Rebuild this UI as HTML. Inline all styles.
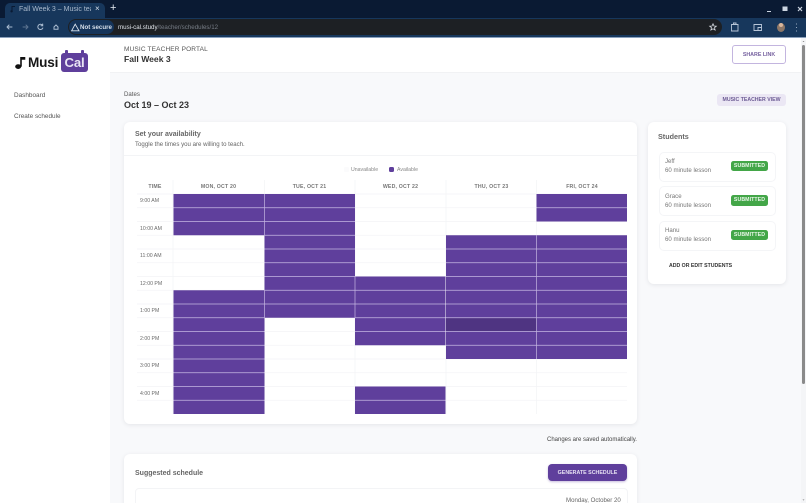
<!DOCTYPE html>
<html>
<head>
<meta charset="utf-8">
<style>
html,body{margin:0;padding:0;width:806px;height:503px;overflow:hidden;background:#f8f9fb;font-family:"Liberation Sans",sans-serif;}
#w{position:relative;width:806px;height:503px;overflow:hidden;background:#f8f9fb;}
.a{position:absolute;white-space:nowrap;}
.card{position:absolute;background:#fff;border-radius:6px;box-shadow:0 1px 4px rgba(60,60,80,.10);}
.stu{position:absolute;left:659px;width:115px;height:28px;background:#fff;border:1px solid #f4f5f7;border-radius:5px;}
.badge{position:absolute;left:731px;width:37px;height:10.5px;background:#43a648;border-radius:2.5px;color:#e8f6e8;font-size:5.2px;font-weight:bold;line-height:11.5px;text-align:center;letter-spacing:.1px;}
.h{font-size:5.2px;font-weight:bold;color:#777;top:184px;text-align:center;letter-spacing:.2px;}
.t{font-size:5.2px;color:#6a6a6a;left:140px;}
.s{font-size:6.1px;line-height:10px;color:#777;left:665px;}
</style>
</head>
<body>
<div id="w">
<!-- Browser chrome -->
<div class="a" style="left:0;top:0;width:806px;height:18px;background:#0a1a33;"></div>
<div class="a" style="left:0;top:18px;width:806px;height:19px;background:#17375c;"></div>
<div class="a" style="left:0;top:37px;width:806px;height:1px;background:#8aa0bc;"></div>
<div class="a" style="left:5px;top:3px;width:100px;height:15px;background:#17375c;border-radius:5px 5px 0 0;"></div>
<svg class="a" style="left:10px;top:5px;" width="7" height="8"><path d="M2 6.5V1.5H5" fill="none" stroke="#0a1a33" stroke-width="1"/><circle cx="1.6" cy="6.3" r="1.2" fill="#0a1a33"/></svg>
<div class="a" style="left:19px;top:3.5px;width:72px;overflow:hidden;font-size:7px;line-height:11px;color:#a9b8cb;">Fall Week 3 – Music teach</div>
<div class="a" style="left:95px;top:3px;font-size:8px;line-height:11px;color:#d5deea;">×</div>
<div class="a" style="left:110px;top:2px;font-size:11px;line-height:13px;color:#e4ebf3;">+</div>
<svg class="a" style="left:0;top:18px;" width="66" height="19" fill="none" stroke-width="1" stroke-linecap="round">
  <path d="M7 9H12M7 9L9 7M7 9L9 11" stroke="#a9bbd0"/>
  <path d="M23 9H28M28 9L26 7M28 9L26 11" stroke="#5d7591"/>
  <path d="M42.5 7.3A2.6 2.6 0 1 0 42.8 10M42.7 6V7.8H41" stroke="#a9bbd0"/>
  <path d="M54 9L56 7L58 9V11.2H54Z" stroke="#a9bbd0"/>
</svg>
<div class="a" style="left:68px;top:19px;width:654px;height:16px;background:#1d2024;border-radius:8px;"></div>
<div class="a" style="left:69px;top:20px;width:45px;height:14px;background:#15345a;border-radius:7px;"></div>
<svg class="a" style="left:71px;top:23px;" width="9" height="9" fill="none"><path d="M4.2 1.2L8 7.8H.6Z" stroke="#dbe3ee" stroke-width=".9"/></svg>
<div class="a" style="left:80px;top:22px;font-size:6.2px;line-height:11px;font-weight:bold;color:#d6dfea;">Not secure</div>
<div class="a" style="left:118px;top:22px;font-size:6.2px;line-height:11px;color:#dfe3e8;">musi-cal.study<span style="color:#767c85;">/teacher/schedules/12</span></div>
<svg class="a" style="left:708px;top:22px;" width="10" height="10"><path d="M5 1.8L6 4L8.3 4.2L6.5 5.7L7.1 8L5 6.8L2.9 8L3.5 5.7L1.7 4.2L4 4Z" fill="none" stroke="#d7dbe0" stroke-width=".8"/></svg>
<svg class="a" style="left:728px;top:20px;" width="78" height="15" fill="none" stroke="#b8c6d8" stroke-width=".9">
  <path d="M3.5 4.5H10V11H3.5Z"/><path d="M5.5 4.5V3H8V4.5"/>
  <path d="M26 4.5H33.5V10.5H26ZM30 7.5H33.5V10.5H30Z"/>
  <circle cx="68.5" cy="4" r=".55" fill="#b8c6d8" stroke="none"/><circle cx="68.5" cy="7.5" r=".55" fill="#b8c6d8" stroke="none"/><circle cx="68.5" cy="11" r=".55" fill="#b8c6d8" stroke="none"/>
</svg>
<div class="a" style="left:777px;top:23px;width:8px;height:9px;border-radius:50%;background:#8c7768;"></div>
<div class="a" style="left:779px;top:23px;width:4px;height:4px;border-radius:50%;background:#d9b79c;"></div>
<svg class="a" style="left:765px;top:4px;" width="40" height="10" fill="none" stroke="#cdd6e2" stroke-width="1">
  <path d="M2 7.5H6"/><path d="M18 3H22V6.5H18Z" fill="#cdd6e2"/><path d="M33 3L37 7M37 3L33 7" stroke-width="1.2"/>
</svg>

<!-- Sidebar -->
<div class="a" style="left:0;top:38px;width:110px;height:465px;background:#fff;"></div>
<svg class="a" style="left:14px;top:54px;" width="14" height="18">
  <ellipse cx="4.2" cy="12.6" rx="3" ry="2.4" fill="#111"/>
  <path d="M6.2 12.6V3H11.3V5.8H7.8V12.6Z" fill="#111"/>
</svg>
<div class="a" style="left:28px;top:52.5px;font-size:13.6px;line-height:20px;font-weight:bold;color:#161616;letter-spacing:-.2px;">Musi</div>
<div class="a" style="left:61px;top:53px;width:27px;height:19px;background:#5f3f9c;border-radius:3px;"></div>
<div class="a" style="left:65px;top:50px;width:3px;height:4px;background:#5f3f9c;border-radius:1px;"></div>
<div class="a" style="left:81px;top:50px;width:3px;height:4px;background:#5f3f9c;border-radius:1px;"></div>
<div class="a" style="left:61px;top:54px;width:27px;height:18px;text-align:center;font-size:13.2px;line-height:18px;font-weight:bold;color:#e9e5f4;letter-spacing:-.2px;">Cal</div>
<div class="a" style="left:14px;top:91px;font-size:6.4px;line-height:10px;color:#555;">Dashboard</div>
<div class="a" style="left:14px;top:112px;font-size:6.4px;line-height:10px;color:#555;">Create schedule</div>

<!-- Header -->
<div class="a" style="left:110px;top:38px;width:691px;height:34px;background:#fff;border-bottom:1px solid #f1f2f4;"></div>
<div class="a" style="left:124px;top:43.5px;font-size:6.5px;line-height:11px;color:#555;letter-spacing:.15px;">MUSIC TEACHER PORTAL</div>
<div class="a" style="left:124px;top:53px;font-size:8.6px;line-height:13px;font-weight:bold;color:#333;">Fall Week 3</div>
<div class="a" style="left:732px;top:45px;width:52px;height:17px;border:1px solid #c3b5df;border-radius:3px;background:#fff;text-align:center;font-size:5.3px;line-height:18px;font-weight:bold;color:#76619f;">SHARE LINK</div>

<!-- Dates -->
<div class="a" style="left:124px;top:89px;font-size:6.1px;line-height:11px;color:#555;">Dates</div>
<div class="a" style="left:124px;top:98px;font-size:9px;line-height:14px;font-weight:bold;color:#333;">Oct 19 – Oct 23</div>
<div class="a" style="left:717px;top:94px;width:69px;height:12px;background:#ebe7f4;border-radius:3px;text-align:center;font-size:5.2px;line-height:13px;font-weight:bold;color:#6c5b94;">MUSIC TEACHER VIEW</div>

<!-- Availability card -->
<div class="card" style="left:124px;top:122px;width:513px;height:302px;"></div>
<div class="a" style="left:124px;top:155px;width:513px;height:1px;background:#f3f4f6;"></div>
<div class="a" style="left:135px;top:128.5px;font-size:7px;line-height:11px;font-weight:bold;color:#666;">Set your availability</div>
<div class="a" style="left:135px;top:138.5px;font-size:6.1px;line-height:11px;color:#666;">Toggle the times you are willing to teach.</div>
<div class="a" style="left:344px;top:167px;width:5px;height:5px;border-radius:1.5px;background:#fbfbfc;"></div>
<div class="a" style="left:351px;top:165px;font-size:5.2px;line-height:11px;color:#888;">Unavailable</div>
<div class="a" style="left:389px;top:167px;width:5px;height:5px;border-radius:1.5px;background:#5f3f9c;"></div>
<div class="a" style="left:397px;top:165px;font-size:5.2px;line-height:11px;color:#888;">Available</div>

<div class="a h" style="left:137px;width:36px;line-height:7px;">TIME</div>
<div class="a h" style="left:173px;width:91px;line-height:7px;">MON, OCT 20</div>
<div class="a h" style="left:264px;width:91px;line-height:7px;">TUE, OCT 21</div>
<div class="a h" style="left:355px;width:91px;line-height:7px;">WED, OCT 22</div>
<div class="a h" style="left:446px;width:91px;line-height:7px;">THU, OCT 23</div>
<div class="a h" style="left:537px;width:90px;line-height:7px;">FRI, OCT 24</div>

<svg class="a" style="left:0;top:0;" width="806" height="503">
  <g stroke="#f3f4f6" stroke-width=".7">
    <path d="M137 194H627M137 207.75H627M137 221.5H627M137 235.25H627M137 249H627M137 262.75H627M137 276.5H627M137 290.25H627M137 304H627M137 317.75H627M137 331.5H627M137 345.25H627M137 359H627M137 372.75H627M137 386.5H627M137 400.25H627"/>
    <path d="M173 180V414M264.5 180V414M355 180V414M446 180V414M536.5 180V414"/>
  </g>
  <g fill="#5f3f9c">
    <rect x="173.5" y="194" width="91" height="41.25"/>
    <rect x="173.5" y="290.25" width="91" height="123.75"/>
    <rect x="264.5" y="194" width="90.5" height="123.75"/>
    <rect x="355" y="276.5" width="90.5" height="68.75"/>
    <rect x="355" y="386.5" width="90.5" height="27.5"/>
    <rect x="446" y="235.25" width="90.5" height="123.75"/>
    <rect x="536.5" y="194" width="90.5" height="27.5"/>
    <rect x="536.5" y="235.25" width="90.5" height="123.75"/>
  </g>
  <rect x="446" y="317.75" width="90.5" height="13.75" fill="#4f3482"/>
  <g stroke="#c5b6e2" stroke-width=".7">
    <path d="M173.5 207.75H355M173.5 221.5H355M264.5 235.25H355M264.5 249H355M264.5 262.75H355M264.5 276.5H355M264.5 290.25H355M173.5 304H355"/>
    <path d="M173.5 317.75H264.5M173.5 331.5H264.5M173.5 345.25H264.5M173.5 359H264.5M173.5 372.75H264.5M173.5 386.5H264.5M173.5 400.25H264.5"/>
    <path d="M355 290.25H445.5M355 304H445.5M355 317.75H445.5M355 331.5H445.5M355 400.25H445.5"/>
    <path d="M446 249H627M446 262.75H627M446 276.5H627M446 290.25H627M446 304H627M446 317.75H627M446 331.5H627M446 345.25H627M536.5 207.75H627"/>
    <path d="M264.5 194V235.25M264.5 290.25V317.75M536.5 235.25V359M355 276.5V317.75"/>
  </g>
</svg>

<div class="a t" style="top:197px;line-height:9px;">9:00 AM</div>
<div class="a t" style="top:224.5px;line-height:9px;">10:00 AM</div>
<div class="a t" style="top:252px;line-height:9px;">11:00 AM</div>
<div class="a t" style="top:279.5px;line-height:9px;">12:00 PM</div>
<div class="a t" style="top:307px;line-height:9px;">1:00 PM</div>
<div class="a t" style="top:334.5px;line-height:9px;">2:00 PM</div>
<div class="a t" style="top:362px;line-height:9px;">3:00 PM</div>
<div class="a t" style="top:389.5px;line-height:9px;">4:00 PM</div>

<!-- Students card -->
<div class="card" style="left:648px;top:122px;width:138px;height:162px;"></div>
<div class="a" style="left:658px;top:131px;font-size:7.2px;line-height:12px;font-weight:bold;color:#666;">Students</div>

<div class="stu" style="top:152px;"></div>
<div class="a s" style="top:157px;">Jeff</div>
<div class="a s" style="top:166px;">60 minute lesson</div>
<div class="badge" style="top:160.5px;">SUBMITTED</div>

<div class="stu" style="top:186px;"></div>
<div class="a s" style="top:191.5px;">Grace</div>
<div class="a s" style="top:200.5px;">60 minute lesson</div>
<div class="badge" style="top:195px;">SUBMITTED</div>

<div class="stu" style="top:221px;"></div>
<div class="a s" style="top:226px;">Hanu</div>
<div class="a s" style="top:235px;">60 minute lesson</div>
<div class="badge" style="top:229.5px;">SUBMITTED</div>

<div class="a" style="left:669px;top:261px;font-size:5.2px;line-height:10px;font-weight:bold;color:#333;">ADD OR EDIT STUDENTS</div>

<div class="a" style="left:547px;top:435px;font-size:6px;line-height:10px;color:#444;">Changes are saved automatically.</div>

<!-- Suggested schedule -->
<div class="card" style="left:124px;top:454px;width:513px;height:60px;"></div>
<div class="a" style="left:135px;top:468px;font-size:7px;line-height:12px;font-weight:bold;color:#666;">Suggested schedule</div>
<div class="a" style="left:548px;top:464px;width:79px;height:17px;background:#5f3f9c;border-radius:4px;box-shadow:0 1px 2px rgba(95,63,156,.35);text-align:center;font-size:5.3px;line-height:18px;font-weight:bold;color:#e6e0f2;">GENERATE SCHEDULE</div>
<div class="a" style="left:135px;top:488px;width:491px;height:30px;border:1px solid #f3f4f6;border-radius:4px;background:#fff;"></div>
<div class="a" style="left:566px;top:496px;font-size:6.1px;line-height:10px;color:#666;">Monday, October 20</div>

<!-- Scrollbar -->
<div class="a" style="left:801px;top:38px;width:5px;height:465px;background:#f4f5f7;"></div>
<div class="a" style="left:802px;top:45px;width:3px;height:339px;background:#8a8a8a;border-radius:1.5px;"></div>
<svg class="a" style="left:801px;top:38px;" width="5" height="465"><path d="M1.5 4L2.5 3L3.5 4Z M1.5 461.5L2.5 462.5L3.5 461.5Z" fill="#777"/></svg>
</div>
</body>
</html>
